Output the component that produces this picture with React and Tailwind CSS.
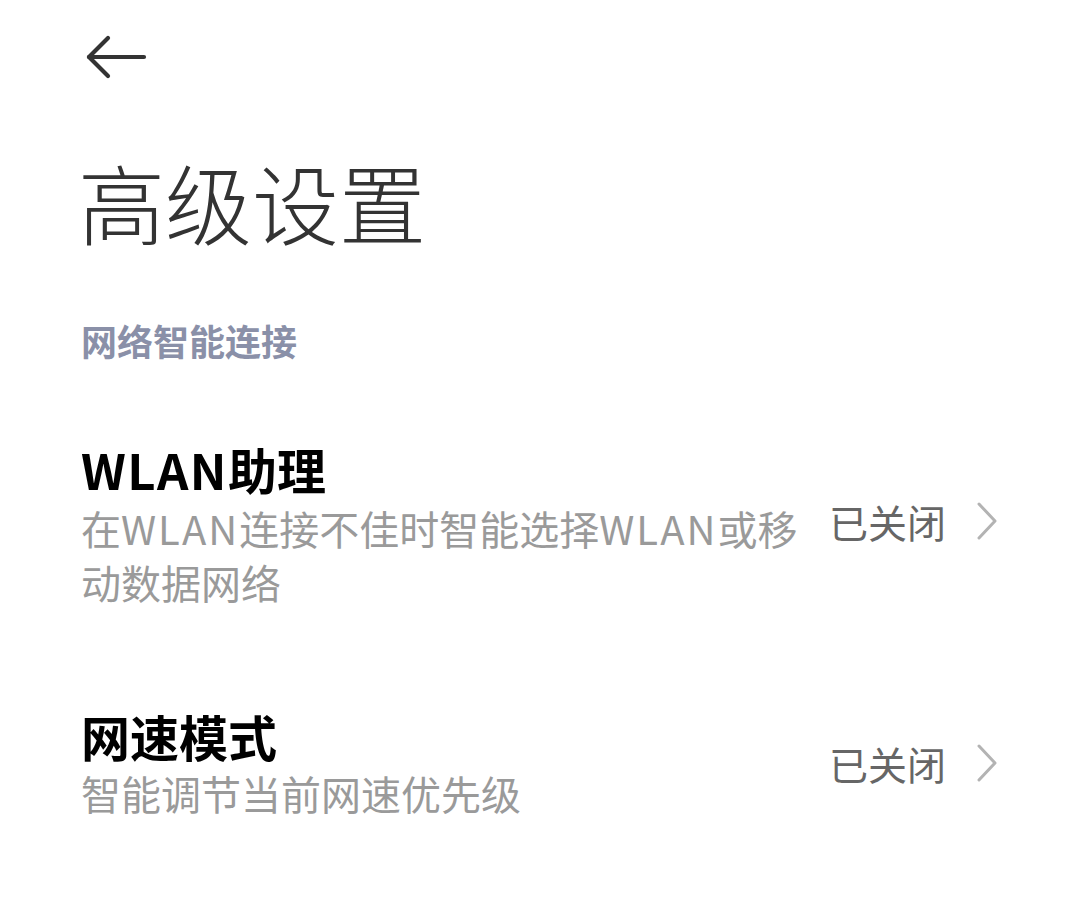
export default function App() {
  const font = { fontFamily: '"Noto Sans CJK SC", "Noto Sans", sans-serif' };
  const W = () => <span className="tracking-[2px]">WLAN</span>;
  return (
    <div className="w-[1080px] h-[915px] bg-white overflow-hidden" style={font}>
      <div className="h-[141px] pl-[86px] pt-[34px]">
        <svg width="62" height="46" viewBox="0 0 62 46" fill="none">
          <path d="M3 23 H58" stroke="#333333" strokeWidth="4.2" strokeLinecap="round" />
          <path d="M22 4 L3 23 L22 42" stroke="#333333" strokeWidth="4.2" strokeLinecap="round" strokeLinejoin="round" />
        </svg>
      </div>
      <div className="pl-[78px] h-[120px] leading-[120px] text-[87px] font-light text-[#333333]">
        高级设置
      </div>
      <div className="pl-[81px] mt-[54px] h-[50px] leading-[50px] text-[36px] font-bold text-[#8a90a8]">
        网络智能连接
      </div>
      <div className="mt-[74px] pl-[81px] pr-[82px] flex items-center">
        <div className="w-[730px]">
          <div className="h-[60px] leading-[60px] text-[49px] font-bold text-black">
            <span className="tracking-[1.5px]">WLAN</span>助理
          </div>
          <div className="mt-[2px] leading-[54px] text-[40px] text-[#9a9a9a]">
            在<W />连接不佳时智能选择<W />或移<br />动数据网络
          </div>
        </div>
        <div className="flex-1 flex items-center justify-end gap-[30px] mb-[6px]">
          <span className="text-[39px] leading-[54px] text-[#666666]">已关闭</span>
          <svg width="22" height="38" viewBox="0 0 22 38" fill="none">
            <path d="M3 2 L19 19 L3 36" stroke="#b3b3b3" strokeWidth="3" strokeLinecap="round" strokeLinejoin="round" />
          </svg>
        </div>
      </div>
      <div className="mt-[97px] pl-[81px] pr-[82px] flex items-center">
        <div className="w-[730px]">
          <div className="h-[60px] leading-[60px] text-[49px] font-bold text-black">网速模式</div>
          <div className="mt-[0px] leading-[54px] text-[40px] text-[#9a9a9a]">智能调节当前网速优先级</div>
        </div>
        <div className="flex-1 flex items-center justify-end gap-[30px]">
          <span className="text-[39px] leading-[54px] text-[#666666]">已关闭</span>
          <svg width="22" height="38" viewBox="0 0 22 38" fill="none">
            <path d="M3 2 L19 19 L3 36" stroke="#b3b3b3" strokeWidth="3" strokeLinecap="round" strokeLinejoin="round" />
          </svg>
        </div>
      </div>
    </div>
  );
}
